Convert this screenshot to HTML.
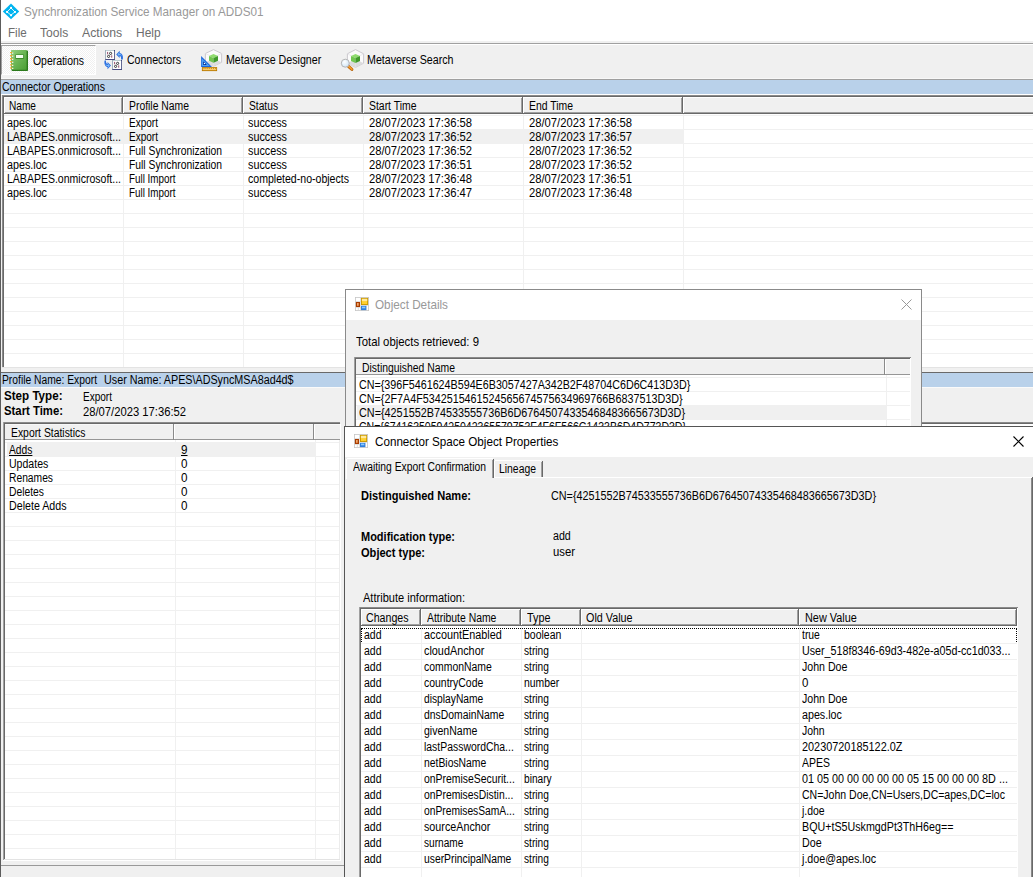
<!DOCTYPE html>
<html lang="en"><head><meta charset="utf-8"><title>Synchronization Service Manager on ADDS01</title>
<style>
html,body{margin:0;padding:0;}
body{width:1033px;height:877px;overflow:hidden;background:#fff;position:relative;font-family:"Liberation Sans", sans-serif;font-size:12.0px;color:#000;}
#app{position:absolute;left:0;top:0;width:1033px;height:877px;overflow:hidden;}
#app div{position:absolute;}
#app span{position:absolute;white-space:pre;line-height:16px;height:16px;transform-origin:0 50%;}
#app svg{position:absolute;overflow:visible;}
</style></head>
<body><div id="app">
<div style="left:0px;top:0px;width:1033px;height:877px;background:#fff;"></div>
<div style="left:0px;top:0px;width:1px;height:877px;background:#5c5c5c;"></div>
<div style="left:1px;top:43px;width:1px;height:834px;background:#b4b4b4;"></div>
<svg style="left:2px;top:3px" width="18" height="17" viewBox="0 0 18 17"><polygon points="9,0.6 17.2,8.4 9,16.2 0.8,8.4" fill="#00b4f0"/><path d="M9 4.9 L12.9 8.9 L9 12.2 L5.1 8.9 Z" fill="none" stroke="#fff" stroke-width="0.9"/><rect x="8.1" y="3.9" width="1.9" height="1.9" fill="#fff"/><rect x="12" y="8" width="1.9" height="1.9" fill="#fff"/><rect x="8.1" y="11.3" width="1.9" height="1.9" fill="#fff"/><rect x="4.1" y="8" width="1.9" height="1.9" fill="#fff"/></svg>
<span style="left:24px;top:3.6999999999999993px;font-size:12.6px;color:#999;transform:scaleX(0.9296);">Synchronization Service Manager on ADDS01</span>
<span style="left:8px;top:25px;font-size:12.4px;color:#6d6d6d;transform:scaleX(0.9365);">File</span>
<span style="left:40px;top:25px;font-size:12.4px;color:#6d6d6d;transform:scaleX(0.9745);">Tools</span>
<span style="left:82px;top:25px;font-size:12.4px;color:#6d6d6d;transform:scaleX(0.9892);">Actions</span>
<span style="left:136px;top:25px;font-size:12.4px;color:#6d6d6d;transform:scaleX(0.9653);">Help</span>
<div style="left:1px;top:45px;width:1032px;height:34px;background:#f0f0f0;"></div>
<div style="left:1px;top:41px;width:1032px;height:2px;background:#f0f0f0;"></div>
<div style="left:1px;top:43px;width:1032px;height:1px;background:#a0a0a0;"></div>
<div style="left:1px;top:44px;width:1032px;height:1px;background:#fff;"></div>
<div style="left:1px;top:45px;width:95px;height:30px;background:#f8f8f8;background:conic-gradient(#fff 25%,#f0f0f0 0 50%,#fff 0 75%,#f0f0f0 0) 0 0/2px 2px;border:1px solid #fff;border-top-color:#a0a0a0;border-left-color:#a0a0a0;box-sizing:border-box;"></div>
<svg style="left:9px;top:49px" width="20" height="23" viewBox="0 0 20 23"><defs><linearGradient id="nb" x1="0" y1="0" x2="1" y2="1"><stop offset="0" stop-color="#93d07e"/><stop offset="0.5" stop-color="#6ab554"/><stop offset="1" stop-color="#4b9f34"/></linearGradient></defs><rect x="2.6" y="1.5" width="16.4" height="20.4" rx="0.7" fill="#2c7a1c"/><rect x="2" y="0.9" width="15.6" height="19.8" rx="0.5" fill="url(#nb)"/><rect x="6.3" y="5.5" width="8.6" height="4.2" rx="0.6" fill="#2f7d1f"/><rect x="6.9" y="6" width="7.3" height="3" fill="#f4fff0"/><rect x="3.0" y="3.5" width="1.3" height="1.2" fill="#fff"/><rect x="1" y="2.9" width="2.4" height="1.4" rx="0.7" fill="#e9a324"/><rect x="3.0" y="6.6" width="1.3" height="1.2" fill="#fff"/><rect x="1" y="6.0" width="2.4" height="1.4" rx="0.7" fill="#e9a324"/><rect x="3.0" y="9.7" width="1.3" height="1.2" fill="#fff"/><rect x="1" y="9.1" width="2.4" height="1.4" rx="0.7" fill="#e9a324"/><rect x="3.0" y="12.7" width="1.3" height="1.2" fill="#fff"/><rect x="1" y="12.1" width="2.4" height="1.4" rx="0.7" fill="#e9a324"/><rect x="3.0" y="15.8" width="1.3" height="1.2" fill="#fff"/><rect x="1" y="15.2" width="2.4" height="1.4" rx="0.7" fill="#e9a324"/><rect x="3.0" y="18.8" width="1.3" height="1.2" fill="#fff"/><rect x="1" y="18.2" width="2.4" height="1.4" rx="0.7" fill="#e9a324"/></svg>
<svg style="left:103px;top:49px" width="22" height="23" viewBox="0 0 22 23"><rect x="2.2" y="1.0" width="9.8" height="9.8" fill="#1f2466"/><rect x="2.2" y="1.0" width="9" height="9" fill="#b7cacd"/><rect x="3.1" y="1.9" width="8.1" height="8.1" fill="#fff"/><rect x="4.2" y="2.9" width="0.9" height="2.4" fill="#8a3a5a"/><circle cx="7.6000000000000005" cy="4.4" r="1.1" fill="none" stroke="#222" stroke-width="0.9"/><circle cx="5.6" cy="7.4" r="1.1" fill="none" stroke="#222" stroke-width="0.9"/><rect x="8.3" y="6.3" width="0.9" height="2.4" fill="#8a3a5a"/><rect x="9.2" y="11.0" width="9.8" height="9.8" fill="#1f2466"/><rect x="9.2" y="11.0" width="9" height="9" fill="#b7cacd"/><rect x="10.1" y="11.9" width="8.1" height="8.1" fill="#fff"/><rect x="11.2" y="12.9" width="0.9" height="2.4" fill="#8a3a5a"/><circle cx="14.6" cy="14.4" r="1.1" fill="none" stroke="#222" stroke-width="0.9"/><circle cx="12.6" cy="17.4" r="1.1" fill="none" stroke="#222" stroke-width="0.9"/><rect x="15.299999999999999" y="16.3" width="0.9" height="2.4" fill="#8a3a5a"/><path d="M13.2 5.4 L16.7 1.8 L16.7 4.0 C19.6 4.4 20.4 7.6 19.8 10.4 L18.0 10.4 C18.3 8.6 17.8 7.2 16.7 6.8 L16.7 8.9 Z" fill="#2b6fe0"/><path d="M14.4 5.3 L16.2 3.4 L16.2 4.8 C17.6 5 18.6 5.8 19 7 C18.2 6.2 17.3 6 16.2 6 L16.2 7.2 Z" fill="#7ab8f7"/><g transform="translate(-0.9,0)"><path d="M8.9 16.5 L5.4 20.2 L5.4 18.0 C2.7 17.6 1.9 14.4 2.5 11.6 L3.9 11.6 C3.7 13.4 4.3 14.8 5.4 15.2 L5.4 13.1 Z" fill="#2b6fe0"/><path d="M7.7 16.6 L5.9 18.5 L5.9 17.1 C4.5 16.9 3.5 16.1 3.1 14.9 C3.9 15.7 4.8 15.9 5.9 15.9 L5.9 14.7 Z" fill="#7ab8f7"/></g></svg>
<svg style="left:200px;top:48px" width="24" height="24" viewBox="0 0 24 24"><polygon points="13.5,1.6 21.6,5.5 21.6,14.3 13.5,18.2 5.4,14.3 5.4,5.5" fill="#fbfbfb" stroke="#c6c3ca" stroke-width="0.9"/><polygon points="5.4,14.3 13.5,10.4 21.6,14.3 13.5,18.2" fill="#dcdcde"/><path d="M13.5 9.4 L13.5 18.2 M5.4 5.5 L13.5 9.4 L21.6 5.5" stroke="#e4e2e6" stroke-width="0.7" fill="none"/><polygon points="13.5,6 18.0,8.0 13.5,10.0 9.0,8.0" fill="#8fdc6e"/><polygon points="9.0,8.0 13.5,10.0 13.5,14.8 9.0,12.8" fill="#72c750"/><polygon points="18.0,8.0 13.5,10.0 13.5,14.8 18.0,12.8" fill="#3f9a2a"/><polygon points="1.1,8 1.1,18.9 12,18.9" fill="#1c66dc"/><polygon points="1.9,10.5 1.9,18.1 9.6,18.1" fill="#4ea2f4"/><polygon points="3.2,13.2 3.2,16.9 6.9,16.9" fill="#0a2f98"/><rect x="3.9" y="15" width="1.1" height="1.1" fill="#fff"/><rect x="1.9" y="19.1" width="15.2" height="4" fill="#b87a00"/><rect x="2.7" y="19.9" width="13.6" height="2.3" fill="#fbc96a"/><rect x="3.6" y="19.9" width="0.8" height="1.1" fill="#c58a10"/><rect x="5.5" y="19.9" width="0.8" height="1.1" fill="#c58a10"/><rect x="7.4" y="19.9" width="0.8" height="1.1" fill="#c58a10"/><rect x="9.3" y="19.9" width="0.8" height="1.1" fill="#c58a10"/><rect x="11.2" y="19.9" width="0.8" height="1.1" fill="#c58a10"/><rect x="13.1" y="19.9" width="0.8" height="1.1" fill="#c58a10"/><rect x="15.0" y="19.9" width="0.8" height="1.1" fill="#c58a10"/></svg>
<svg style="left:340px;top:48px" width="26" height="24" viewBox="0 0 26 24"><polygon points="15.5,1.6 23.6,5.8 23.6,15.2 15.5,19.4 7.4,15.2 7.4,5.8" fill="#fbfbfb" stroke="#c6c3ca" stroke-width="0.9"/><polygon points="7.4,15.2 15.5,11.0 23.6,15.2 15.5,19.4" fill="#dcdcde"/><path d="M15.5 10.0 L15.5 19.4 M7.4 5.8 L15.5 10.0 L23.6 5.8" stroke="#e4e2e6" stroke-width="0.7" fill="none"/><polygon points="15.5,6 20.0,8.1 15.5,10.1 11.0,8.1" fill="#8fdc6e"/><polygon points="11.0,8.1 15.5,10.1 15.5,15 11.0,12.9" fill="#72c750"/><polygon points="20.0,8.1 15.5,10.1 15.5,15 20.0,12.9" fill="#3f9a2a"/><defs><radialGradient id="mg" cx="0.4" cy="0.35" r="0.8"><stop offset="0" stop-color="#ffffff"/><stop offset="0.6" stop-color="#dcecf8"/><stop offset="1" stop-color="#c4d4ee"/></radialGradient></defs><path d="M8.6 18.5 L11.9 21.4" stroke="#b8640a" stroke-width="3" stroke-linecap="round"/><path d="M8.7 18.4 L11.8 21.1" stroke="#f59a2a" stroke-width="1.8" stroke-linecap="round"/><circle cx="5.3" cy="15.2" r="4" fill="url(#mg)" stroke="#b4b4b4" stroke-width="1"/></svg>
<span style="left:32.7px;top:53px;transform:scaleX(0.8688);">Operations</span>
<span style="left:127px;top:52px;transform:scaleX(0.8798);">Connectors</span>
<span style="left:226px;top:52px;transform:scaleX(0.8865);">Metaverse Designer</span>
<span style="left:367px;top:52px;transform:scaleX(0.8882);">Metaverse Search</span>
<div style="left:1px;top:79px;width:1032px;height:15px;background:#b9d1ea;"></div>
<div style="left:1px;top:78px;width:1032px;height:1px;background:#f8f8f8;"></div>
<div style="left:1px;top:79px;width:1032px;height:1px;background:#a0a0a0;"></div>
<div style="left:1px;top:94px;width:1032px;height:1px;background:#fff;"></div>
<span style="left:2px;top:79px;transform:scaleX(0.8773);">Connector Operations</span>
<div style="left:1px;top:95px;width:1032px;height:278px;background:#f0f0f0;"></div>
<div style="left:2px;top:95px;width:1px;height:273px;background:#8a8a8a;"></div>
<div style="left:3px;top:96px;width:1px;height:272px;background:#696969;"></div>
<div style="left:2px;top:95px;width:1031px;height:1px;background:#8a8a8a;"></div>
<div style="left:3px;top:96px;width:1030px;height:1px;background:#696969;"></div>
<div style="left:4px;top:97px;width:1029px;height:271px;background:#fff;"></div>
<div style="left:4px;top:115px;width:1029px;height:1px;background:#f0f0f0;"></div>
<div style="left:4px;top:129px;width:1029px;height:1px;background:#f0f0f0;"></div>
<div style="left:4px;top:143px;width:1029px;height:1px;background:#f0f0f0;"></div>
<div style="left:4px;top:157px;width:1029px;height:1px;background:#f0f0f0;"></div>
<div style="left:4px;top:171px;width:1029px;height:1px;background:#f0f0f0;"></div>
<div style="left:4px;top:185px;width:1029px;height:1px;background:#f0f0f0;"></div>
<div style="left:4px;top:199px;width:1029px;height:1px;background:#f0f0f0;"></div>
<div style="left:4px;top:213px;width:1029px;height:1px;background:#f0f0f0;"></div>
<div style="left:4px;top:227px;width:1029px;height:1px;background:#f0f0f0;"></div>
<div style="left:4px;top:241px;width:1029px;height:1px;background:#f0f0f0;"></div>
<div style="left:4px;top:255px;width:1029px;height:1px;background:#f0f0f0;"></div>
<div style="left:4px;top:269px;width:1029px;height:1px;background:#f0f0f0;"></div>
<div style="left:4px;top:283px;width:1029px;height:1px;background:#f0f0f0;"></div>
<div style="left:4px;top:297px;width:1029px;height:1px;background:#f0f0f0;"></div>
<div style="left:4px;top:311px;width:1029px;height:1px;background:#f0f0f0;"></div>
<div style="left:4px;top:325px;width:1029px;height:1px;background:#f0f0f0;"></div>
<div style="left:4px;top:339px;width:1029px;height:1px;background:#f0f0f0;"></div>
<div style="left:4px;top:353px;width:1029px;height:1px;background:#f0f0f0;"></div>
<div style="left:4px;top:367px;width:1029px;height:1px;background:#f0f0f0;"></div>
<div style="left:123px;top:97px;width:1px;height:271px;background:#f0f0f0;"></div>
<div style="left:243px;top:97px;width:1px;height:271px;background:#f0f0f0;"></div>
<div style="left:363px;top:97px;width:1px;height:271px;background:#f0f0f0;"></div>
<div style="left:523px;top:97px;width:1px;height:271px;background:#f0f0f0;"></div>
<div style="left:683px;top:97px;width:1px;height:271px;background:#f0f0f0;"></div>
<div style="left:2px;top:367px;width:1031px;height:1px;background:#e3e3e3;"></div>
<div style="left:4px;top:97px;width:1029px;height:17px;background:#f0f0f0;"></div>
<div style="left:4px;top:97px;width:119px;height:1px;background:#fff;"></div>
<div style="left:4px;top:97px;width:1px;height:17px;background:#fff;"></div>
<div style="left:4px;top:113px;width:119px;height:1px;background:#696969;"></div>
<div style="left:5px;top:112px;width:117px;height:1px;background:#a0a0a0;"></div>
<div style="left:122px;top:97px;width:1px;height:17px;background:#696969;"></div>
<div style="left:121px;top:98px;width:1px;height:15px;background:#a0a0a0;"></div>
<div style="left:123px;top:97px;width:120px;height:1px;background:#fff;"></div>
<div style="left:123px;top:97px;width:1px;height:17px;background:#fff;"></div>
<div style="left:123px;top:113px;width:120px;height:1px;background:#696969;"></div>
<div style="left:124px;top:112px;width:118px;height:1px;background:#a0a0a0;"></div>
<div style="left:242px;top:97px;width:1px;height:17px;background:#696969;"></div>
<div style="left:241px;top:98px;width:1px;height:15px;background:#a0a0a0;"></div>
<div style="left:243px;top:97px;width:120px;height:1px;background:#fff;"></div>
<div style="left:243px;top:97px;width:1px;height:17px;background:#fff;"></div>
<div style="left:243px;top:113px;width:120px;height:1px;background:#696969;"></div>
<div style="left:244px;top:112px;width:118px;height:1px;background:#a0a0a0;"></div>
<div style="left:362px;top:97px;width:1px;height:17px;background:#696969;"></div>
<div style="left:361px;top:98px;width:1px;height:15px;background:#a0a0a0;"></div>
<div style="left:363px;top:97px;width:160px;height:1px;background:#fff;"></div>
<div style="left:363px;top:97px;width:1px;height:17px;background:#fff;"></div>
<div style="left:363px;top:113px;width:160px;height:1px;background:#696969;"></div>
<div style="left:364px;top:112px;width:158px;height:1px;background:#a0a0a0;"></div>
<div style="left:522px;top:97px;width:1px;height:17px;background:#696969;"></div>
<div style="left:521px;top:98px;width:1px;height:15px;background:#a0a0a0;"></div>
<div style="left:523px;top:97px;width:160px;height:1px;background:#fff;"></div>
<div style="left:523px;top:97px;width:1px;height:17px;background:#fff;"></div>
<div style="left:523px;top:113px;width:160px;height:1px;background:#696969;"></div>
<div style="left:524px;top:112px;width:158px;height:1px;background:#a0a0a0;"></div>
<div style="left:682px;top:97px;width:1px;height:17px;background:#696969;"></div>
<div style="left:681px;top:98px;width:1px;height:15px;background:#a0a0a0;"></div>
<div style="left:683px;top:97px;width:357px;height:1px;background:#fff;"></div>
<div style="left:683px;top:97px;width:1px;height:17px;background:#fff;"></div>
<div style="left:683px;top:113px;width:357px;height:1px;background:#696969;"></div>
<div style="left:684px;top:112px;width:355px;height:1px;background:#a0a0a0;"></div>
<div style="left:1039px;top:97px;width:1px;height:17px;background:#696969;"></div>
<div style="left:1038px;top:98px;width:1px;height:15px;background:#a0a0a0;"></div>
<span style="left:9px;top:97.5px;transform:scaleX(0.8433);">Name</span>
<span style="left:129px;top:97.5px;transform:scaleX(0.8651);">Profile Name</span>
<span style="left:249px;top:97.5px;transform:scaleX(0.8522);">Status</span>
<span style="left:369px;top:97.5px;transform:scaleX(0.8686);">Start Time</span>
<span style="left:529px;top:97.5px;transform:scaleX(0.8678);">End Time</span>
<div style="left:4px;top:130px;width:679px;height:14px;background:#f0f0f0;"></div>
<span style="left:6.5px;top:115px;transform:scaleX(0.8948);">apes.loc</span>
<span style="left:129px;top:115px;transform:scaleX(0.836);">Export</span>
<span style="left:248px;top:115px;transform:scaleX(0.8995);">success</span>
<span style="left:369px;top:115px;transform:scaleX(0.9354);">28/07/2023 17:36:58</span>
<span style="left:529px;top:115px;transform:scaleX(0.9354);">28/07/2023 17:36:58</span>
<span style="left:6.5px;top:129px;transform:scaleX(0.8765);">LABAPES.onmicrosoft...</span>
<span style="left:129px;top:129px;transform:scaleX(0.836);">Export</span>
<span style="left:248px;top:129px;transform:scaleX(0.8995);">success</span>
<span style="left:369px;top:129px;transform:scaleX(0.9354);">28/07/2023 17:36:52</span>
<span style="left:529px;top:129px;transform:scaleX(0.9354);">28/07/2023 17:36:57</span>
<span style="left:6.5px;top:143px;transform:scaleX(0.8765);">LABAPES.onmicrosoft...</span>
<span style="left:129px;top:143px;transform:scaleX(0.8606);">Full Synchronization</span>
<span style="left:248px;top:143px;transform:scaleX(0.8995);">success</span>
<span style="left:369px;top:143px;transform:scaleX(0.9354);">28/07/2023 17:36:52</span>
<span style="left:529px;top:143px;transform:scaleX(0.9354);">28/07/2023 17:36:52</span>
<span style="left:6.5px;top:157px;transform:scaleX(0.8948);">apes.loc</span>
<span style="left:129px;top:157px;transform:scaleX(0.8606);">Full Synchronization</span>
<span style="left:248px;top:157px;transform:scaleX(0.8995);">success</span>
<span style="left:369px;top:157px;transform:scaleX(0.9354);">28/07/2023 17:36:51</span>
<span style="left:529px;top:157px;transform:scaleX(0.9354);">28/07/2023 17:36:52</span>
<span style="left:6.5px;top:171px;transform:scaleX(0.8765);">LABAPES.onmicrosoft...</span>
<span style="left:129px;top:171px;transform:scaleX(0.8203);">Full Import</span>
<span style="left:248px;top:171px;transform:scaleX(0.8803);">completed-no-objects</span>
<span style="left:369px;top:171px;transform:scaleX(0.9354);">28/07/2023 17:36:48</span>
<span style="left:529px;top:171px;transform:scaleX(0.9354);">28/07/2023 17:36:51</span>
<span style="left:6.5px;top:185px;transform:scaleX(0.8948);">apes.loc</span>
<span style="left:129px;top:185px;transform:scaleX(0.8203);">Full Import</span>
<span style="left:248px;top:185px;transform:scaleX(0.8995);">success</span>
<span style="left:369px;top:185px;transform:scaleX(0.9354);">28/07/2023 17:36:47</span>
<span style="left:529px;top:185px;transform:scaleX(0.9354);">28/07/2023 17:36:48</span>
<div style="left:1px;top:372px;width:1032px;height:1px;background:#696969;"></div>
<div style="left:1px;top:373px;width:1032px;height:14px;background:#b9d1ea;"></div>
<span style="left:2px;top:372px;transform:scaleX(0.858);">Profile Name: Export</span>
<span style="left:104px;top:372px;transform:scaleX(0.8967);">User Name: APES\ADSyncMSA8ad4d$</span>
<div style="left:1px;top:387px;width:1032px;height:490px;background:#f0f0f0;"></div>
<div style="left:1px;top:387px;width:1032px;height:1px;background:#fafafa;"></div>
<span style="left:4px;top:388px;font-weight:bold;transform:scaleX(0.9677);">Step Type:</span>
<span style="left:83px;top:389px;transform:scaleX(0.836);">Export</span>
<span style="left:4px;top:403px;font-weight:bold;transform:scaleX(0.9445);">Start Time:</span>
<span style="left:83px;top:404px;transform:scaleX(0.9354);">28/07/2023 17:36:52</span>
<div style="left:345px;top:422px;width:688px;height:1px;background:#8a8a8a;"></div>
<div style="left:345px;top:423px;width:688px;height:1px;background:#696969;"></div>
<div style="left:345px;top:424px;width:688px;height:4px;background:#fff;"></div>
<div style="left:3px;top:422px;width:337px;height:1px;background:#8a8a8a;"></div>
<div style="left:4px;top:423px;width:336px;height:1px;background:#696969;"></div>
<div style="left:3px;top:422px;width:1px;height:438px;background:#a0a0a0;"></div>
<div style="left:4px;top:423px;width:1px;height:437px;background:#696969;"></div>
<div style="left:5px;top:424px;width:334px;height:436px;background:#fff;"></div>
<div style="left:5px;top:442px;width:334px;height:1px;background:#f0f0f0;"></div>
<div style="left:5px;top:456px;width:334px;height:1px;background:#f0f0f0;"></div>
<div style="left:5px;top:470px;width:334px;height:1px;background:#f0f0f0;"></div>
<div style="left:5px;top:484px;width:334px;height:1px;background:#f0f0f0;"></div>
<div style="left:5px;top:498px;width:334px;height:1px;background:#f0f0f0;"></div>
<div style="left:5px;top:512px;width:334px;height:1px;background:#f0f0f0;"></div>
<div style="left:5px;top:526px;width:334px;height:1px;background:#f0f0f0;"></div>
<div style="left:5px;top:540px;width:334px;height:1px;background:#f0f0f0;"></div>
<div style="left:5px;top:554px;width:334px;height:1px;background:#f0f0f0;"></div>
<div style="left:5px;top:568px;width:334px;height:1px;background:#f0f0f0;"></div>
<div style="left:5px;top:582px;width:334px;height:1px;background:#f0f0f0;"></div>
<div style="left:5px;top:596px;width:334px;height:1px;background:#f0f0f0;"></div>
<div style="left:5px;top:610px;width:334px;height:1px;background:#f0f0f0;"></div>
<div style="left:5px;top:624px;width:334px;height:1px;background:#f0f0f0;"></div>
<div style="left:5px;top:638px;width:334px;height:1px;background:#f0f0f0;"></div>
<div style="left:5px;top:652px;width:334px;height:1px;background:#f0f0f0;"></div>
<div style="left:5px;top:666px;width:334px;height:1px;background:#f0f0f0;"></div>
<div style="left:5px;top:680px;width:334px;height:1px;background:#f0f0f0;"></div>
<div style="left:5px;top:694px;width:334px;height:1px;background:#f0f0f0;"></div>
<div style="left:5px;top:708px;width:334px;height:1px;background:#f0f0f0;"></div>
<div style="left:5px;top:722px;width:334px;height:1px;background:#f0f0f0;"></div>
<div style="left:5px;top:736px;width:334px;height:1px;background:#f0f0f0;"></div>
<div style="left:5px;top:750px;width:334px;height:1px;background:#f0f0f0;"></div>
<div style="left:5px;top:764px;width:334px;height:1px;background:#f0f0f0;"></div>
<div style="left:5px;top:778px;width:334px;height:1px;background:#f0f0f0;"></div>
<div style="left:5px;top:792px;width:334px;height:1px;background:#f0f0f0;"></div>
<div style="left:5px;top:806px;width:334px;height:1px;background:#f0f0f0;"></div>
<div style="left:5px;top:820px;width:334px;height:1px;background:#f0f0f0;"></div>
<div style="left:5px;top:834px;width:334px;height:1px;background:#f0f0f0;"></div>
<div style="left:5px;top:848px;width:334px;height:1px;background:#f0f0f0;"></div>
<div style="left:175px;top:424px;width:1px;height:436px;background:#f0f0f0;"></div>
<div style="left:315px;top:424px;width:1px;height:436px;background:#f0f0f0;"></div>
<div style="left:339px;top:424px;width:1px;height:436px;background:#ececec;"></div>
<div style="left:340px;top:424px;width:1px;height:436px;background:#fff;"></div>
<div style="left:4px;top:859px;width:336px;height:1px;background:#e3e3e3;"></div>
<div style="left:3px;top:860px;width:338px;height:1px;background:#fff;"></div>
<div style="left:5px;top:424px;width:335px;height:16px;background:#f0f0f0;"></div>
<div style="left:5px;top:424px;width:169px;height:1px;background:#f8f8f8;"></div>
<div style="left:5px;top:439px;width:169px;height:1px;background:#969696;"></div>
<div style="left:173px;top:424px;width:1px;height:16px;background:#8a8a8a;"></div>
<div style="left:174px;top:424px;width:1px;height:16px;background:#fff;"></div>
<div style="left:174px;top:424px;width:140px;height:1px;background:#f8f8f8;"></div>
<div style="left:174px;top:439px;width:140px;height:1px;background:#969696;"></div>
<div style="left:313px;top:424px;width:1px;height:16px;background:#8a8a8a;"></div>
<div style="left:314px;top:424px;width:1px;height:16px;background:#fff;"></div>
<div style="left:314px;top:424px;width:26px;height:1px;background:#f8f8f8;"></div>
<div style="left:314px;top:439px;width:26px;height:1px;background:#969696;"></div>
<span style="left:11px;top:424.5px;transform:scaleX(0.8648);">Export Statistics</span>
<div style="left:7px;top:442px;width:308px;height:15px;background:#f0f0f0;"></div>
<span style="left:9px;top:442px;transform:scaleX(0.8553);text-decoration:underline;">Adds</span>
<span style="left:181px;top:442px;transform:scaleX(0.972);text-decoration:underline;">9</span>
<span style="left:9px;top:456px;transform:scaleX(0.8791);">Updates</span>
<span style="left:181px;top:456px;transform:scaleX(0.972);">0</span>
<span style="left:9px;top:470px;transform:scaleX(0.8567);">Renames</span>
<span style="left:181px;top:470px;transform:scaleX(0.972);">0</span>
<span style="left:9px;top:484px;transform:scaleX(0.8602);">Deletes</span>
<span style="left:181px;top:484px;transform:scaleX(0.972);">0</span>
<span style="left:9px;top:498px;transform:scaleX(0.8885);">Delete Adds</span>
<span style="left:181px;top:498px;transform:scaleX(0.972);">0</span>
<div style="left:1px;top:865px;width:344px;height:1px;background:#999;"></div>
<div style="left:345px;top:289px;width:577px;height:145px;background:#f0f0f0;border:1px solid #8a8a8a;box-sizing:border-box;"></div>
<div style="left:346px;top:290px;width:575px;height:30px;background:#fff;"></div>
<svg style="left:355px;top:297px" width="14" height="14" viewBox="0 0 14 14"><rect x="0.4" y="0.4" width="13.2" height="13.2" fill="#fff" stroke="#c6c6c6" stroke-width="0.8"/><path d="M0.5 4.6 H5.6 M5.6 0.5 V13.5 M0.5 10.4 H5.6 M3.3 10.4 V13.5 M11.3 8.4 V13.5 M5.6 8.4 H13.5" stroke="#d4d4d4" stroke-width="0.8" fill="none"/><rect x="6" y="0.9" width="7.1" height="7.1" fill="#c99700"/><rect x="6.9" y="1.8" width="5.3" height="5.3" fill="#ffd030"/><rect x="6.9" y="1.8" width="5.3" height="2.3" fill="#ffe9a0"/><rect x="0.9" y="5" width="4.1" height="5" fill="#a83c00"/><rect x="2" y="6" width="1.7" height="2.8" fill="#f3a86a"/><rect x="6" y="8.9" width="5.3" height="4.2" fill="#2f7fe0"/><rect x="7" y="9.6" width="3.3" height="1.7" fill="#8fcbfa"/></svg>
<span style="left:375px;top:297px;font-size:12.4px;color:#999;transform:scaleX(0.9463);">Object Details</span>
<svg style="left:901px;top:299px" width="11" height="11" viewBox="0 0 11 11"><path d="M0.5 0.5 L10.5 10.5 M10.5 0.5 L0.5 10.5" stroke="#999" stroke-width="1" fill="none"/></svg>
<span style="left:356px;top:334px;font-size:12.6px;transform:scaleX(0.901);">Total objects retrieved: 9</span>
<div style="left:354px;top:357px;width:557px;height:1px;background:#8a8a8a;"></div>
<div style="left:355px;top:358px;width:556px;height:1px;background:#696969;"></div>
<div style="left:354px;top:357px;width:1px;height:77px;background:#a0a0a0;"></div>
<div style="left:355px;top:358px;width:1px;height:76px;background:#696969;"></div>
<div style="left:356px;top:359px;width:554px;height:75px;background:#fff;"></div>
<div style="left:356px;top:377px;width:554px;height:1px;background:#f0f0f0;"></div>
<div style="left:356px;top:391px;width:554px;height:1px;background:#f0f0f0;"></div>
<div style="left:356px;top:405px;width:554px;height:1px;background:#f0f0f0;"></div>
<div style="left:356px;top:419px;width:554px;height:1px;background:#f0f0f0;"></div>
<div style="left:356px;top:433px;width:554px;height:1px;background:#f0f0f0;"></div>
<div style="left:886px;top:359px;width:1px;height:75px;background:#f0f0f0;"></div>
<div style="left:910px;top:358px;width:1px;height:76px;background:#fff;"></div>
<div style="left:356px;top:359px;width:554px;height:16px;background:#f0f0f0;"></div>
<div style="left:356px;top:359px;width:529px;height:1px;background:#f8f8f8;"></div>
<div style="left:356px;top:374px;width:529px;height:1px;background:#969696;"></div>
<div style="left:884px;top:359px;width:1px;height:16px;background:#8a8a8a;"></div>
<div style="left:885px;top:359px;width:1px;height:16px;background:#fff;"></div>
<div style="left:885px;top:359px;width:25px;height:1px;background:#f8f8f8;"></div>
<div style="left:885px;top:374px;width:25px;height:1px;background:#969696;"></div>
<span style="left:362px;top:360px;transform:scaleX(0.866);">Distinguished Name</span>
<div style="left:357px;top:406px;width:529px;height:14px;background:#f0f0f0;"></div>
<span style="left:359px;top:377px;transform:scaleX(0.8939);">CN={396F5461624B594E6B3057427A342B2F48704C6D6C413D3D}</span>
<span style="left:359px;top:391px;transform:scaleX(0.897);">CN={2F7A4F5342515461524565674575634969766B6837513D3D}</span>
<span style="left:359px;top:405px;transform:scaleX(0.9022);">CN={4251552B74533555736B6D67645074335468483665673D3D}</span>
<span style="left:359px;top:419px;transform:scaleX(0.8775);">CN={6741635059425042365579753F4F6F566C1433B6D4D773D3D}</span>
<div style="left:344px;top:426px;width:700px;height:460px;background:#f0f0f0;border:1px solid #555;box-sizing:border-box;"></div>
<div style="left:345px;top:427px;width:690px;height:30px;background:#fff;"></div>
<svg style="left:354px;top:434px" width="14" height="14" viewBox="0 0 14 14"><rect x="0.4" y="0.4" width="13.2" height="13.2" fill="#fff" stroke="#c6c6c6" stroke-width="0.8"/><path d="M0.5 4.6 H5.6 M5.6 0.5 V13.5 M0.5 10.4 H5.6 M3.3 10.4 V13.5 M11.3 8.4 V13.5 M5.6 8.4 H13.5" stroke="#d4d4d4" stroke-width="0.8" fill="none"/><rect x="6" y="0.9" width="7.1" height="7.1" fill="#c99700"/><rect x="6.9" y="1.8" width="5.3" height="5.3" fill="#ffd030"/><rect x="6.9" y="1.8" width="5.3" height="2.3" fill="#ffe9a0"/><rect x="0.9" y="5" width="4.1" height="5" fill="#a83c00"/><rect x="2" y="6" width="1.7" height="2.8" fill="#f3a86a"/><rect x="6" y="8.9" width="5.3" height="4.2" fill="#2f7fe0"/><rect x="7" y="9.6" width="3.3" height="1.7" fill="#8fcbfa"/></svg>
<span style="left:374.5px;top:434px;font-size:12.4px;transform:scaleX(0.9404);">Connector Space Object Properties</span>
<svg style="left:1012.5px;top:435.5px" width="11" height="11" viewBox="0 0 11 11"><path d="M0.5 0.5 L10.5 10.5 M10.5 0.5 L0.5 10.5" stroke="#000" stroke-width="1.1" fill="none"/></svg>
<div style="left:346px;top:477px;width:686px;height:1px;background:#fff;"></div>
<div style="left:1031px;top:478px;width:1px;height:399px;background:#8a8a8a;"></div>
<div style="left:1032px;top:477px;width:1px;height:400px;background:#696969;"></div>
<div style="left:346px;top:458px;width:148px;height:21px;background:#f0f0f0;"></div>
<div style="left:347px;top:458px;width:146px;height:1px;background:#fff;"></div>
<div style="left:346px;top:459px;width:1px;height:20px;background:#fff;"></div>
<div style="left:493px;top:459px;width:1px;height:19px;background:#696969;"></div>
<div style="left:492px;top:460px;width:1px;height:18px;background:#a0a0a0;"></div>
<span style="left:353px;top:459px;transform:scaleX(0.8607);">Awaiting Export Confirmation</span>
<div style="left:495px;top:460px;width:46px;height:1px;background:#fff;"></div>
<div style="left:494px;top:461px;width:1px;height:16px;background:#fff;"></div>
<div style="left:542px;top:461px;width:1px;height:16px;background:#696969;"></div>
<div style="left:541px;top:462px;width:1px;height:15px;background:#a0a0a0;"></div>
<span style="left:499px;top:461px;transform:scaleX(0.8661);">Lineage</span>
<span style="left:361px;top:487.7px;font-weight:bold;transform:scaleX(0.9216);">Distinguished Name:</span>
<span style="left:550.5px;top:488px;transform:scaleX(0.8994);">CN={4251552B74533555736B6D67645074335468483665673D3D}</span>
<span style="left:361px;top:528.5px;font-weight:bold;transform:scaleX(0.9155);">Modification type:</span>
<span style="left:553px;top:528px;transform:scaleX(0.8886);">add</span>
<span style="left:361px;top:544.5px;font-weight:bold;transform:scaleX(0.9227);">Object type:</span>
<span style="left:553px;top:544px;transform:scaleX(0.9424);">user</span>
<span style="left:363px;top:590px;transform:scaleX(0.9213);">Attribute information:</span>
<div style="left:359px;top:607px;width:659px;height:1px;background:#8a8a8a;"></div>
<div style="left:360px;top:608px;width:658px;height:1px;background:#696969;"></div>
<div style="left:359px;top:607px;width:1px;height:270px;background:#a0a0a0;"></div>
<div style="left:360px;top:608px;width:1px;height:269px;background:#696969;"></div>
<div style="left:361px;top:609px;width:656px;height:268px;background:#fff;"></div>
<div style="left:361px;top:643px;width:656px;height:1px;background:#f0f0f0;"></div>
<div style="left:361px;top:659px;width:656px;height:1px;background:#f0f0f0;"></div>
<div style="left:361px;top:675px;width:656px;height:1px;background:#f0f0f0;"></div>
<div style="left:361px;top:691px;width:656px;height:1px;background:#f0f0f0;"></div>
<div style="left:361px;top:707px;width:656px;height:1px;background:#f0f0f0;"></div>
<div style="left:361px;top:723px;width:656px;height:1px;background:#f0f0f0;"></div>
<div style="left:361px;top:739px;width:656px;height:1px;background:#f0f0f0;"></div>
<div style="left:361px;top:755px;width:656px;height:1px;background:#f0f0f0;"></div>
<div style="left:361px;top:771px;width:656px;height:1px;background:#f0f0f0;"></div>
<div style="left:361px;top:787px;width:656px;height:1px;background:#f0f0f0;"></div>
<div style="left:361px;top:803px;width:656px;height:1px;background:#f0f0f0;"></div>
<div style="left:361px;top:819px;width:656px;height:1px;background:#f0f0f0;"></div>
<div style="left:361px;top:835px;width:656px;height:1px;background:#f0f0f0;"></div>
<div style="left:361px;top:851px;width:656px;height:1px;background:#f0f0f0;"></div>
<div style="left:361px;top:867px;width:656px;height:1px;background:#f0f0f0;"></div>
<div style="left:421px;top:609px;width:1px;height:268px;background:#f0f0f0;"></div>
<div style="left:521px;top:609px;width:1px;height:268px;background:#f0f0f0;"></div>
<div style="left:581px;top:609px;width:1px;height:268px;background:#f0f0f0;"></div>
<div style="left:799px;top:609px;width:1px;height:268px;background:#f0f0f0;"></div>
<div style="left:1017px;top:608px;width:1px;height:269px;background:#fff;"></div>
<div style="left:361px;top:609px;width:656px;height:17px;background:#f0f0f0;"></div>
<div style="left:361px;top:609px;width:60px;height:1px;background:#fff;"></div>
<div style="left:361px;top:609px;width:1px;height:17px;background:#fff;"></div>
<div style="left:361px;top:625px;width:60px;height:1px;background:#696969;"></div>
<div style="left:362px;top:624px;width:58px;height:1px;background:#a0a0a0;"></div>
<div style="left:420px;top:609px;width:1px;height:17px;background:#696969;"></div>
<div style="left:419px;top:610px;width:1px;height:15px;background:#a0a0a0;"></div>
<div style="left:421px;top:609px;width:100px;height:1px;background:#fff;"></div>
<div style="left:421px;top:609px;width:1px;height:17px;background:#fff;"></div>
<div style="left:421px;top:625px;width:100px;height:1px;background:#696969;"></div>
<div style="left:422px;top:624px;width:98px;height:1px;background:#a0a0a0;"></div>
<div style="left:520px;top:609px;width:1px;height:17px;background:#696969;"></div>
<div style="left:519px;top:610px;width:1px;height:15px;background:#a0a0a0;"></div>
<div style="left:521px;top:609px;width:60px;height:1px;background:#fff;"></div>
<div style="left:521px;top:609px;width:1px;height:17px;background:#fff;"></div>
<div style="left:521px;top:625px;width:60px;height:1px;background:#696969;"></div>
<div style="left:522px;top:624px;width:58px;height:1px;background:#a0a0a0;"></div>
<div style="left:580px;top:609px;width:1px;height:17px;background:#696969;"></div>
<div style="left:579px;top:610px;width:1px;height:15px;background:#a0a0a0;"></div>
<div style="left:581px;top:609px;width:218px;height:1px;background:#fff;"></div>
<div style="left:581px;top:609px;width:1px;height:17px;background:#fff;"></div>
<div style="left:581px;top:625px;width:218px;height:1px;background:#696969;"></div>
<div style="left:582px;top:624px;width:216px;height:1px;background:#a0a0a0;"></div>
<div style="left:798px;top:609px;width:1px;height:17px;background:#696969;"></div>
<div style="left:797px;top:610px;width:1px;height:15px;background:#a0a0a0;"></div>
<div style="left:799px;top:609px;width:218px;height:1px;background:#fff;"></div>
<div style="left:799px;top:609px;width:1px;height:17px;background:#fff;"></div>
<div style="left:799px;top:625px;width:218px;height:1px;background:#696969;"></div>
<div style="left:800px;top:624px;width:216px;height:1px;background:#a0a0a0;"></div>
<div style="left:1016px;top:609px;width:1px;height:17px;background:#696969;"></div>
<div style="left:1015px;top:610px;width:1px;height:15px;background:#a0a0a0;"></div>
<span style="left:366.4px;top:610px;transform:scaleX(0.8866);">Changes</span>
<span style="left:426.8px;top:610px;transform:scaleX(0.867);">Attribute Name</span>
<span style="left:527.2px;top:610px;transform:scaleX(0.8995);">Type</span>
<span style="left:586px;top:610px;transform:scaleX(0.8975);">Old Value</span>
<span style="left:805px;top:610px;transform:scaleX(0.9065);">New Value</span>
<span style="left:364px;top:627px;transform:scaleX(0.8736);">add</span>
<span style="left:424px;top:627px;transform:scaleX(0.9038);">accountEnabled</span>
<span style="left:524px;top:627px;transform:scaleX(0.8732);">boolean</span>
<span style="left:802.3px;top:627px;transform:scaleX(0.8653);">true</span>
<span style="left:364px;top:643px;transform:scaleX(0.8736);">add</span>
<span style="left:424px;top:643px;transform:scaleX(0.9038);">cloudAnchor</span>
<span style="left:524px;top:643px;transform:scaleX(0.8486);">string</span>
<span style="left:802.3px;top:643px;transform:scaleX(0.8924);">User_518f8346-69d3-482e-a05d-cc1d033...</span>
<span style="left:364px;top:659px;transform:scaleX(0.8736);">add</span>
<span style="left:424px;top:659px;transform:scaleX(0.8689);">commonName</span>
<span style="left:524px;top:659px;transform:scaleX(0.8486);">string</span>
<span style="left:802.3px;top:659px;transform:scaleX(0.8837);">John Doe</span>
<span style="left:364px;top:675px;transform:scaleX(0.8736);">add</span>
<span style="left:424px;top:675px;transform:scaleX(0.8715);">countryCode</span>
<span style="left:524px;top:675px;transform:scaleX(0.8676);">number</span>
<span style="left:802.3px;top:675px;transform:scaleX(0.957);">0</span>
<span style="left:364px;top:691px;transform:scaleX(0.8736);">add</span>
<span style="left:424px;top:691px;transform:scaleX(0.8548);">displayName</span>
<span style="left:524px;top:691px;transform:scaleX(0.8486);">string</span>
<span style="left:802.3px;top:691px;transform:scaleX(0.8837);">John Doe</span>
<span style="left:364px;top:707px;transform:scaleX(0.8736);">add</span>
<span style="left:424px;top:707px;transform:scaleX(0.8661);">dnsDomainName</span>
<span style="left:524px;top:707px;transform:scaleX(0.8486);">string</span>
<span style="left:802.3px;top:707px;transform:scaleX(0.8926);">apes.loc</span>
<span style="left:364px;top:723px;transform:scaleX(0.8736);">add</span>
<span style="left:424px;top:723px;transform:scaleX(0.878);">givenName</span>
<span style="left:524px;top:723px;transform:scaleX(0.8486);">string</span>
<span style="left:802.3px;top:723px;transform:scaleX(0.872);">John</span>
<span style="left:364px;top:739px;transform:scaleX(0.8736);">add</span>
<span style="left:424px;top:739px;transform:scaleX(0.8686);">lastPasswordCha...</span>
<span style="left:524px;top:739px;transform:scaleX(0.8486);">string</span>
<span style="left:802.3px;top:739px;transform:scaleX(0.9063);">20230720185122.0Z</span>
<span style="left:364px;top:755px;transform:scaleX(0.8736);">add</span>
<span style="left:424px;top:755px;transform:scaleX(0.8647);">netBiosName</span>
<span style="left:524px;top:755px;transform:scaleX(0.8486);">string</span>
<span style="left:802.3px;top:755px;transform:scaleX(0.8714);">APES</span>
<span style="left:364px;top:771px;transform:scaleX(0.8736);">add</span>
<span style="left:424px;top:771px;transform:scaleX(0.8671);">onPremiseSecurit...</span>
<span style="left:524px;top:771px;transform:scaleX(0.8444);">binary</span>
<span style="left:802.3px;top:771px;transform:scaleX(0.8997);">01 05 00 00 00 00 00 05 15 00 00 00 8D ...</span>
<span style="left:364px;top:787px;transform:scaleX(0.8736);">add</span>
<span style="left:424px;top:787px;transform:scaleX(0.8638);">onPremisesDistin...</span>
<span style="left:524px;top:787px;transform:scaleX(0.8486);">string</span>
<span style="left:802.3px;top:787px;transform:scaleX(0.8767);">CN=John Doe,CN=Users,DC=apes,DC=loc</span>
<span style="left:364px;top:803px;transform:scaleX(0.8736);">add</span>
<span style="left:424px;top:803px;transform:scaleX(0.8562);">onPremisesSamA...</span>
<span style="left:524px;top:803px;transform:scaleX(0.8486);">string</span>
<span style="left:802.3px;top:803px;transform:scaleX(0.872);">j.doe</span>
<span style="left:364px;top:819px;transform:scaleX(0.8736);">add</span>
<span style="left:424px;top:819px;transform:scaleX(0.8954);">sourceAnchor</span>
<span style="left:524px;top:819px;transform:scaleX(0.8486);">string</span>
<span style="left:802.3px;top:819px;transform:scaleX(0.8918);">BQU+tS5UskmgdPt3ThH6eg==</span>
<span style="left:364px;top:835px;transform:scaleX(0.8736);">add</span>
<span style="left:424px;top:835px;transform:scaleX(0.8418);">surname</span>
<span style="left:524px;top:835px;transform:scaleX(0.8486);">string</span>
<span style="left:802.3px;top:835px;transform:scaleX(0.8903);">Doe</span>
<span style="left:364px;top:851px;transform:scaleX(0.8736);">add</span>
<span style="left:424px;top:851px;transform:scaleX(0.8612);">userPrincipalName</span>
<span style="left:524px;top:851px;transform:scaleX(0.8486);">string</span>
<span style="left:802.3px;top:851px;transform:scaleX(0.8926);">j.doe@apes.loc</span>
<div style="left:361px;top:628px;width:656px;height:14px;border:1px dotted #000;border-bottom:none;box-sizing:border-box;"></div>
</div></body></html>
